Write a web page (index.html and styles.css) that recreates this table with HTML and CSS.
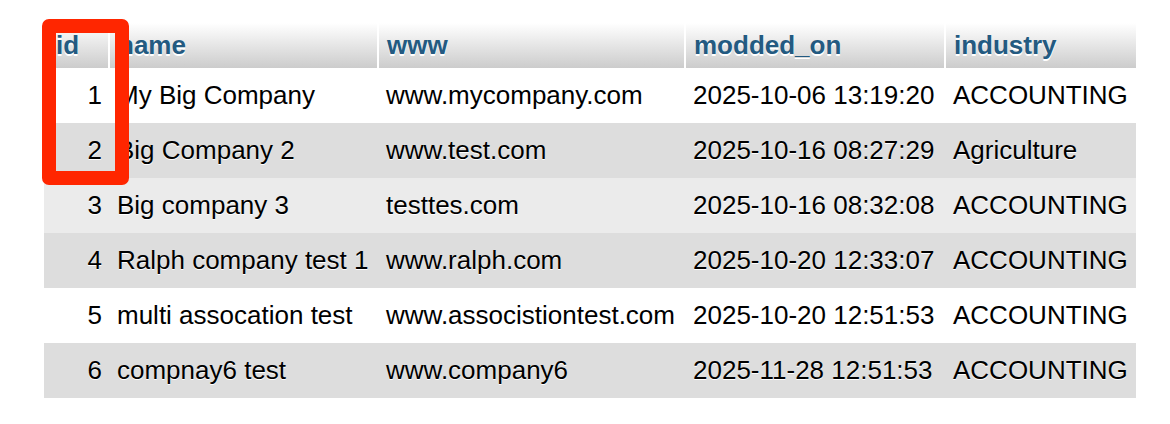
FILE: index.html
```html
<!DOCTYPE html>
<html lang="en">
<head>
<meta charset="utf-8">
<title>Companies</title>
<link rel="stylesheet" href="styles.css">
</head>
<body>
<div class="wrap">
  <table class="data">
    <colgroup>
      <col class="c-id">
      <col class="c-name">
      <col class="c-www">
      <col class="c-mod">
      <col class="c-ind">
    </colgroup>
    <thead>
      <tr>
        <th class="th-id">id</th>
        <th>name</th>
        <th>www</th>
        <th>modded_on</th>
        <th class="last">industry</th>
      </tr>
    </thead>
    <tbody>
      <tr class="odd"><td class="num">1</td><td>My Big Company</td><td>www.mycompany.com</td><td>2025-10-06 13:19:20</td><td>ACCOUNTING</td></tr>
      <tr class="even"><td class="num">2</td><td>Big Company 2</td><td>www.test.com</td><td>2025-10-16 08:27:29</td><td>Agriculture</td></tr>
      <tr class="hover"><td class="num">3</td><td>Big company 3</td><td>testtes.com</td><td>2025-10-16 08:32:08</td><td>ACCOUNTING</td></tr>
      <tr class="even"><td class="num">4</td><td>Ralph company test 1</td><td>www.ralph.com</td><td>2025-10-20 12:33:07</td><td>ACCOUNTING</td></tr>
      <tr class="odd"><td class="num">5</td><td>multi assocation test</td><td>www.associstiontest.com</td><td>2025-10-20 12:51:53</td><td>ACCOUNTING</td></tr>
      <tr class="even"><td class="num">6</td><td>compnay6 test</td><td>www.company6</td><td>2025-11-28 12:51:53</td><td>ACCOUNTING</td></tr>
    </tbody>
  </table>
  <div class="highlight"></div>
</div>
</body>
</html>
```

FILE: styles.css
```css
html, body {
  margin: 0;
  padding: 0;
  background: #ffffff;
}

body {
  font-family: "Liberation Sans", Arial, Helvetica, sans-serif;
  font-size: 26px;
  color: #000;
}

.wrap {
  position: relative;
  padding: 23px 0 0 44px;
}

.data {
  table-layout: fixed;
  border-collapse: separate;
  border-spacing: 0;
  width: 1092px;
}

.c-id { width: 66px; }
.c-name { width: 269px; }
.c-www { width: 307px; }
.c-mod { width: 260px; }
.c-ind { width: 190px; }

.data th {
  height: 45px;
  box-sizing: border-box;
  padding: 7px 8px 8px;
  line-height: 30px;
  text-align: left;
  font-weight: bold;
  color: #235a81;
  text-shadow: 0 2px 0 #ffffff;
  background: linear-gradient(to bottom, #ffffff, #cccccc);
  border-right: 2px solid #ffffff;
  white-space: nowrap;
}

.data th.th-id {
  padding-left: 12px;
}

.data th.last {
  border-right: 0;
}

.data td {
  height: 55px;
  box-sizing: border-box;
  padding: 12px 6px 13px 7px;
  line-height: 30px;
  white-space: nowrap;
  overflow: hidden;
  text-shadow: 0 1px 0 #ffffff;
}

.data td.num {
  text-align: right;
  padding-right: 8px;
}

.odd { background: #ffffff; }
.even { background: #dddddd; }
.hover { background: #ebebeb; }

.highlight {
  position: absolute;
  left: 42px;
  top: 19px;
  width: 87px;
  height: 166px;
  box-sizing: border-box;
  border: 14px solid #ff2600;
  border-radius: 7px;
}
```
